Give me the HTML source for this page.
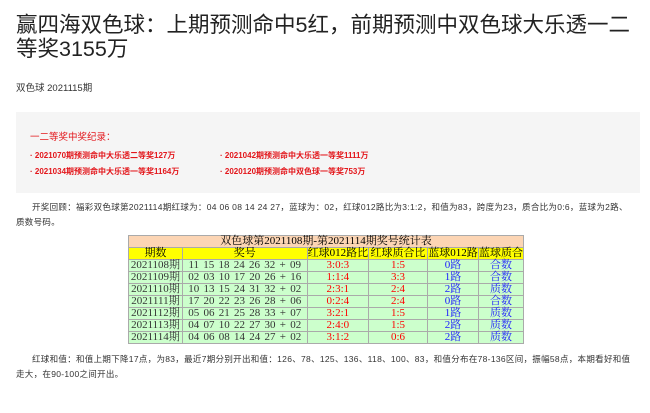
<!DOCTYPE html>
<html><head><meta charset="utf-8"><style>
body{margin:0;background:#fff;font-family:"Liberation Sans","Noto Sans CJK SC",sans-serif;width:650px;height:413px;overflow:hidden;position:relative;color:#333}
.t{position:absolute;left:16px;top:13px;font-size:21.5px;line-height:24px;color:#222;width:640px;white-space:nowrap}
.d{position:absolute;left:16px;top:80px;font-size:9.5px;color:#333}
.box{position:absolute;left:16px;top:112px;width:624px;height:81px;background:#f5f5f5}
.r{position:absolute;color:#e3161b;font-size:8px;font-weight:bold;white-space:nowrap}
.p{position:absolute;left:16px;font-size:8.5px;line-height:15px;width:630px;text-indent:16px;color:#333;letter-spacing:0.3px;white-space:nowrap}
table{position:absolute;left:128px;top:235px;border-collapse:collapse;font-family:"Liberation Serif","Noto Serif CJK SC",serif;font-size:11px;background:#ccffcc;width:396px}
td{border:1px solid #aaa;padding:0;height:11px;line-height:11px;text-align:center;white-space:nowrap}
.h td{background:#ffff00;color:#000}
.c td.n{word-spacing:1.5px}
.c td.red{color:#ff0000}.c td.bl{color:#1a1aff}
</style></head><body>
<div class="t">赢四海双色球：上期预测命中5红，前期预测中双色球大乐透一二<br>等奖3155万</div>
<div class="d">双色球 2021115期</div>
<div class="box"></div>
<div class="r" style="left:30px;top:129px;font-size:9.5px;font-weight:normal">一二等奖中奖纪录：</div>
<div class="r" style="left:30px;top:150px">· 2021070期预测命中大乐透二等奖127万</div>
<div class="r" style="left:220px;top:150px">· 2021042期预测命中大乐透一等奖1111万</div>
<div class="r" style="left:30px;top:166px">· 2021034期预测命中大乐透一等奖1164万</div>
<div class="r" style="left:220px;top:166px">· 2020120期预测命中双色球一等奖753万</div>
<div class="p" style="top:200px">开奖回顾：福彩双色球第2021114期红球为：04 06 08 14 24 27，蓝球为：02，红球012路比为3:1:2，和值为83，跨度为23，质合比为0:6，蓝球为2路、<br>质数号码。</div>
<table>
<tr><td colspan="6" style="background:#fcd5b4;color:#000">双色球第2021108期-第2021114期奖号统计表</td></tr>
<tr class="h"><td style="width:53px">期数</td><td style="width:124px">奖号</td><td style="width:60px">红球012路比</td><td style="width:58px">红球质合比</td><td style="width:50px">蓝球012路</td><td>蓝球质合</td></tr>
<tr class="c"><td>2021108期</td><td class="n">11 15 18 24 26 32 + 09</td><td class="red">3:0:3</td><td class="red">1:5</td><td class="bl">0路</td><td class="bl">合数</td></tr>
<tr class="c"><td>2021109期</td><td class="n">02 03 10 17 20 26 + 16</td><td class="red">1:1:4</td><td class="red">3:3</td><td class="bl">1路</td><td class="bl">合数</td></tr>
<tr class="c"><td>2021110期</td><td class="n">10 13 15 24 31 32 + 02</td><td class="red">2:3:1</td><td class="red">2:4</td><td class="bl">2路</td><td class="bl">质数</td></tr>
<tr class="c"><td>2021111期</td><td class="n">17 20 22 23 26 28 + 06</td><td class="red">0:2:4</td><td class="red">2:4</td><td class="bl">0路</td><td class="bl">合数</td></tr>
<tr class="c"><td>2021112期</td><td class="n">05 06 21 25 28 33 + 07</td><td class="red">3:2:1</td><td class="red">1:5</td><td class="bl">1路</td><td class="bl">质数</td></tr>
<tr class="c"><td>2021113期</td><td class="n">04 07 10 22 27 30 + 02</td><td class="red">2:4:0</td><td class="red">1:5</td><td class="bl">2路</td><td class="bl">质数</td></tr>
<tr class="c"><td>2021114期</td><td class="n">04 06 08 14 24 27 + 02</td><td class="red">3:1:2</td><td class="red">0:6</td><td class="bl">2路</td><td class="bl">质数</td></tr>
</table>
<div class="p" style="top:352px">红球和值：和值上期下降17点，为83，最近7期分别开出和值：126、78、125、136、118、100、83，和值分布在78-136区间，振幅58点，本期看好和值<br>走大，在90-100之间开出。</div>
</body></html>
